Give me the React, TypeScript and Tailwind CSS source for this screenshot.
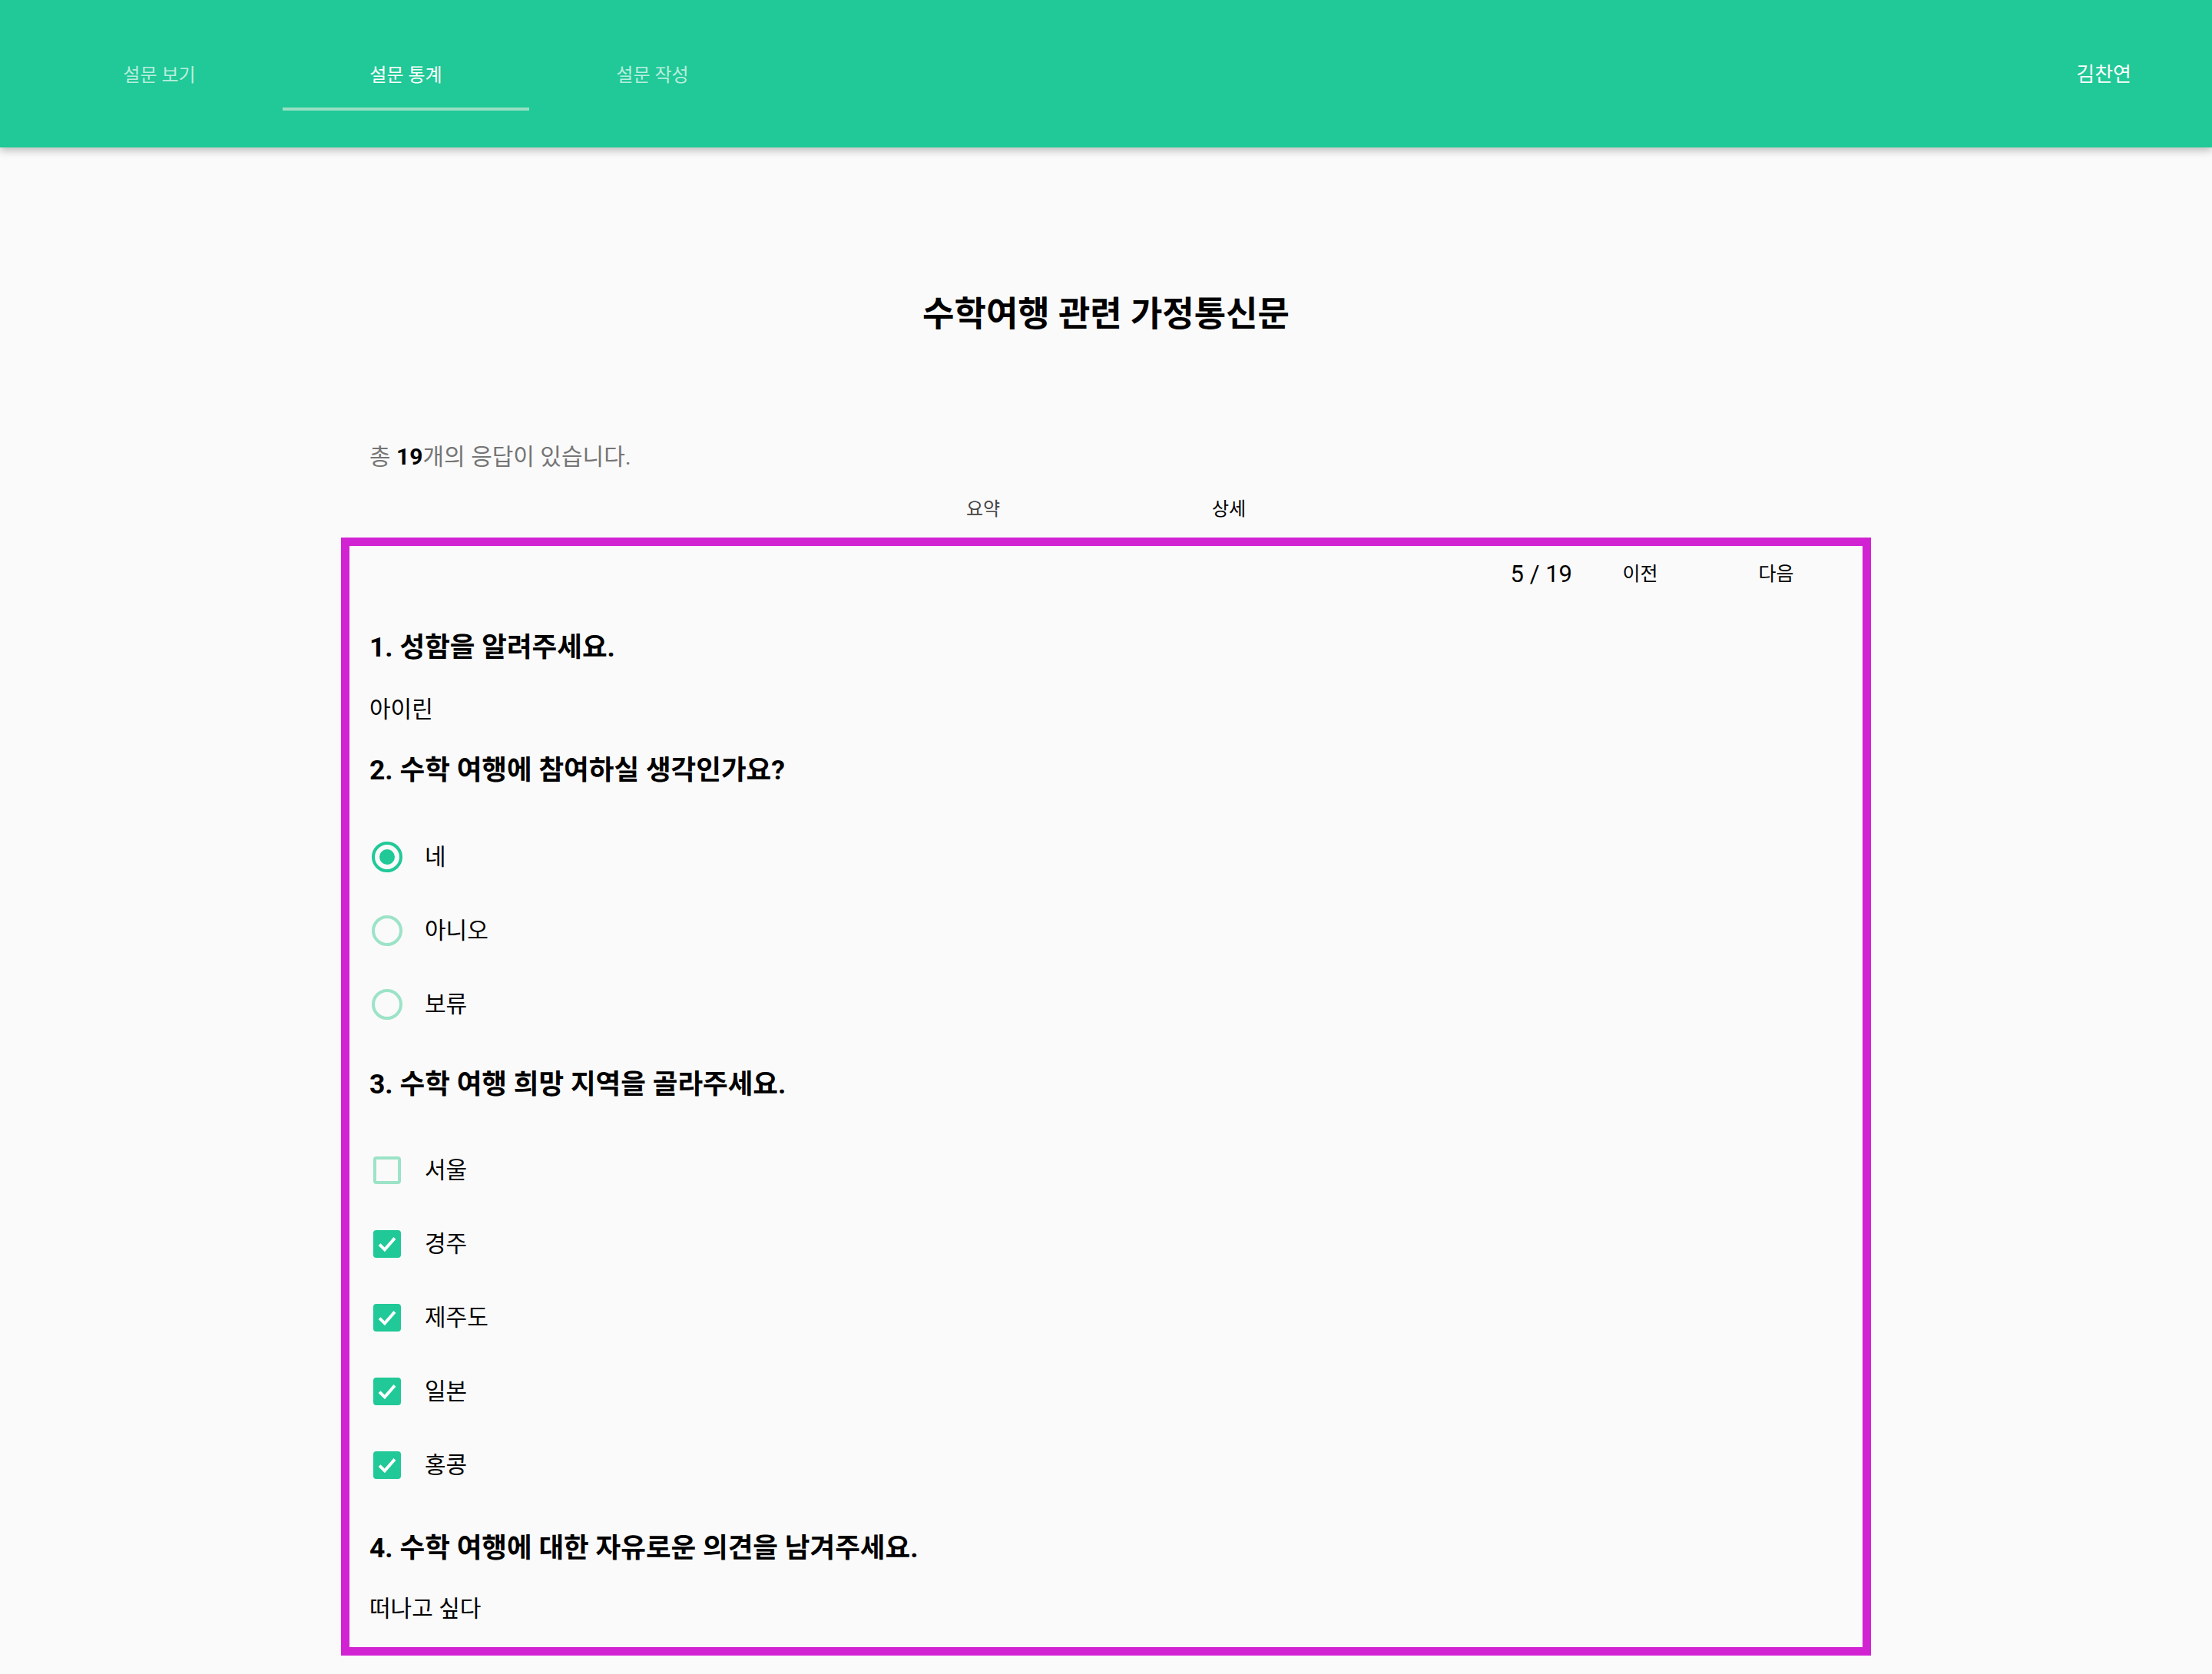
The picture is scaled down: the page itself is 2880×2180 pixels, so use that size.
import React from "react";

const FONT = { fontFamily: 'Roboto, "Noto Sans CJK KR", sans-serif' };

function Radio({ checked, label }: { checked?: boolean; label: string }) {
  return (
    <div className="flex h-[96px] items-center">
      <div className="flex w-[72px] shrink-0 items-center pl-[3px]">
        <div
          className={
            checked
              ? "flex h-[40px] w-[40px] items-center justify-center rounded-full border-[4px] border-[#20c997]"
              : "flex h-[40px] w-[40px] items-center justify-center rounded-full border-[4px] border-[#9ce3c7]"
          }
        >
          {checked && <div className="h-[20px] w-[20px] rounded-full bg-[#20c997]" />}
        </div>
      </div>
      <span className="text-[30px] leading-[40px] text-black">{label}</span>
    </div>
  );
}

function Check({ checked, label }: { checked?: boolean; label: string }) {
  return (
    <div className="flex h-[96px] items-center">
      <div className="flex w-[72px] shrink-0 items-center pl-[5px]">
        {checked ? (
          <div className="flex h-[36px] w-[36px] items-center justify-center rounded-[4px] bg-[#20c997]">
            <svg width="28" height="28" viewBox="0 0 24 24">
              <path d="M3.5 12.5 L9.3 18.3 L20.5 5.5" fill="none" stroke="white" strokeWidth="3.4" />
            </svg>
          </div>
        ) : (
          <div className="h-[36px] w-[36px] rounded-[4px] border-[4px] border-[#9ce3c7]" />
        )}
      </div>
      <span className="text-[30px] leading-[40px] text-black">{label}</span>
    </div>
  );
}

function Question({ children }: { children: React.ReactNode }) {
  return <div className="text-[35.5px] font-bold leading-[48px] text-black">{children}</div>;
}

export default function App() {
  return (
    <div className="min-h-[2180px] bg-[#fafafa]" style={FONT}>
      <header className="relative z-10 flex h-[192px] items-start bg-[#20c997] pt-[48px] shadow-[0_4px_10px_rgba(0,0,0,0.25)]">
        <nav className="flex pl-[47px]">
          <div className="flex h-[96px] w-[321px] items-center justify-center pt-[3px] text-[24px] text-white/70">설문 보기</div>
          <div className="flex h-[96px] w-[321px] flex-col">
            <div className="flex flex-1 items-center justify-center pt-[7px] text-[24px] text-white">설문 통계</div>
            <div className="h-[4px] bg-[#98e0c4]" />
          </div>
          <div className="flex h-[96px] w-[321px] items-center justify-center pt-[3px] text-[24px] text-white/70">설문 작성</div>
        </nav>
        <div className="ml-auto flex h-[96px] items-center pr-[105px] pt-[2px] text-[26px] text-white">김찬연</div>
      </header>

      <main className="mx-auto w-[1992px]">
        <h1 className="mt-[186px] text-center text-[45px] font-bold leading-[64px] text-black">수학여행 관련 가정통신문</h1>
        <p className="mt-[133px] pl-[37px] text-[30px] leading-[40px] text-[#757575]">
          총 <span className="font-bold text-black">19</span>개의 응답이 있습니다.
        </p>
        <div className="mt-[7px] flex h-[78px] justify-center pt-[4px]">
          <div className="flex w-[320px] items-center justify-center text-[24px] text-[#444]">요약</div>
          <div className="flex w-[320px] items-center justify-center text-[24px] text-black">상세</div>
        </div>

        <section className="border-[11px] border-[#d223d3] bg-[#fafafa] pb-[30px] pl-[26px] pr-[24px]">
          <div className="flex h-[74px] items-center justify-end">
            <span className="text-[31px] text-black">5 / 19</span>
            <div className="flex w-[177px] items-center justify-center text-[25px] text-black">이전</div>
            <div className="flex w-[177px] items-center justify-center text-[25px] text-black">다음</div>
          </div>

          <div className="mt-[34px]">
            <Question>1. 성함을 알려주세요.</Question>
          </div>
          <div className="mt-[37px] text-[30px] leading-[40px] text-black">아이린</div>

          <div className="mt-[35px]">
            <Question>2. 수학 여행에 참여하실 생각인가요?</Question>
          </div>
          <div className="mt-[41px]">
            <Radio checked label="네" />
            <Radio label="아니오" />
            <Radio label="보류" />
          </div>

          <div className="mt-[32px]">
            <Question>3. 수학 여행 희망 지역을 골라주세요.</Question>
          </div>
          <div className="mt-[40px]">
            <Check label="서울" />
            <Check checked label="경주" />
            <Check checked label="제주도" />
            <Check checked label="일본" />
            <Check checked label="홍콩" />
          </div>

          <div className="mt-[36px]">
            <Question>4. 수학 여행에 대한 자유로운 의견을 남겨주세요.</Question>
          </div>
          <div className="mt-[35px] text-[30px] leading-[40px] text-black">떠나고 싶다</div>
        </section>
      </main>
    </div>
  );
}
